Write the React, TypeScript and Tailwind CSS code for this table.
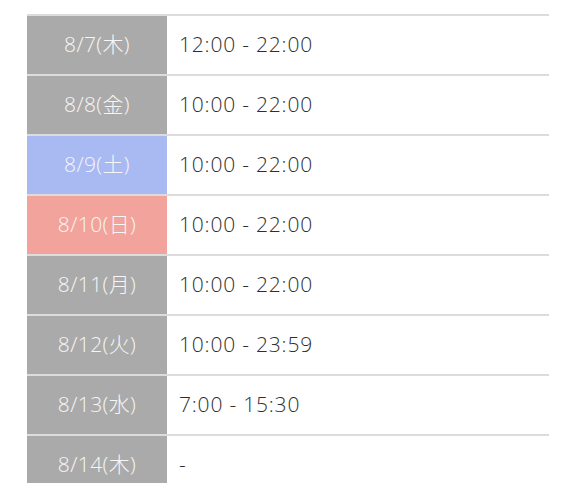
const rows = [
  { date: "8/7(木)", hours: "12:00 - 22:00", tone: "gray" },
  { date: "8/8(金)", hours: "10:00 - 22:00", tone: "gray" },
  { date: "8/9(土)", hours: "10:00 - 22:00", tone: "sat" },
  { date: "8/10(日)", hours: "10:00 - 22:00", tone: "sun" },
  { date: "8/11(月)", hours: "10:00 - 22:00", tone: "gray" },
  { date: "8/12(火)", hours: "10:00 - 23:59", tone: "gray" },
  { date: "8/13(水)", hours: "7:00 - 15:30", tone: "gray" },
  { date: "8/14(木)", hours: "-", tone: "gray" },
];

const toneClass: Record<string, string> = {
  gray: "bg-[#aaaaaa]",
  sat: "bg-[#a9b9f2]",
  sun: "bg-[#f2a39b]",
};

export default function App() {
  return (
    <div className="h-[483px] w-[576px] overflow-hidden bg-white px-[27px] pt-[14px] font-['Open_Sans','Noto_Sans_CJK_JP',sans-serif]">
      <div className="flex flex-col">
        {rows.map((row) => (
          <div key={row.date} className="flex h-[60px] border-t-2 border-[#dcdcdc]">
            <div
              className={`flex w-[140px] items-center justify-center text-[21px] font-light tracking-[0.4px] text-[#f6f6f6] ${toneClass[row.tone]}`}
            >
              {row.date}
            </div>
            <div className="flex flex-1 items-center pl-[12px] text-[21px] font-light tracking-[0.8px] text-[#2e2e2e]">
              {row.hours}
            </div>
          </div>
        ))}
      </div>
    </div>
  );
}
